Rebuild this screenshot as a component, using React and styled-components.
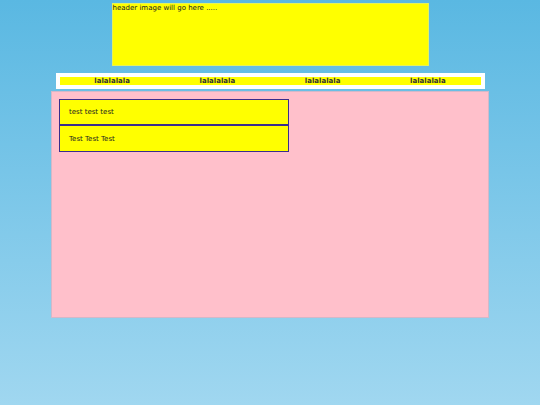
import styled, { createGlobalStyle } from "styled-components";

const GlobalStyle = createGlobalStyle`
  *, *::before, *::after {
    box-sizing: border-box;
  }
  html, body {
    margin: 0;
    padding: 0;
  }
  body {
    min-height: 405px;
    background: linear-gradient(to bottom, #5ab8e2 0%, #a0d7f0 100%);
    font-family: "DejaVu Sans", Verdana, sans-serif;
    color: #222;
  }
`;

// page-wrapper
const Page = styled.div`
  display: flex;
  flex-direction: column;
  align-items: center;
  padding-top: 3px;
`;

// header-image-placeholder
const Header = styled.div`
  width: 317px;
  height: 63px;
  background: #ffff00;
  border: 1px solid #e6f25a;
  font-size: 7px;
  line-height: 8px;
  padding: 0;
`;

// nav-bar
const Nav = styled.nav`
  width: 429px;
  margin-top: 7px;
  padding: 4px;
  background: #fff;
`;

const NavList = styled.ul`
  list-style: none;
  margin: 0;
  padding: 0;
  display: grid;
  grid-template-columns: repeat(4, 1fr);
  background: #ffff00;
  height: 8px;
`;

const NavItem = styled.li`
  font-size: 7px;
  font-weight: bold;
  line-height: 9px;
  text-align: center;
  color: #333;
`;

// content-area
const Content = styled.main`
  width: 438px;
  height: 227px;
  margin-top: 2px;
  background: #ffc0cb;
  border: 1px solid #d4b8c8;
  padding: 7px;
  display: flex;
  flex-direction: column;
`;

const Item = styled.div`
  width: 230px;
  height: ${(p) => (p.$last ? 27 : 26)}px;
  background: #ffff00;
  border: 1px solid #3a2d8c;
  padding-left: 9px;
  font-size: 7px;
  display: flex;
  align-items: center;
`;

const navLinks = ["lalalalala", "lalalalala", "lalalalala", "lalalalala"];
const items = ["test test test", "Test Test Test"];

export default function App() {
  return (
    <>
      <GlobalStyle />
      <Page>
        <Header>header image will go here .....</Header>
        <Nav>
          <NavList>
            {navLinks.map((l, i) => (
              <NavItem key={i}>{l}</NavItem>
            ))}
          </NavList>
        </Nav>
        <Content>
          {items.map((t, i) => (
            <Item key={t} $last={i === items.length - 1}>
              {t}
            </Item>
          ))}
        </Content>
      </Page>
    </>
  );
}
